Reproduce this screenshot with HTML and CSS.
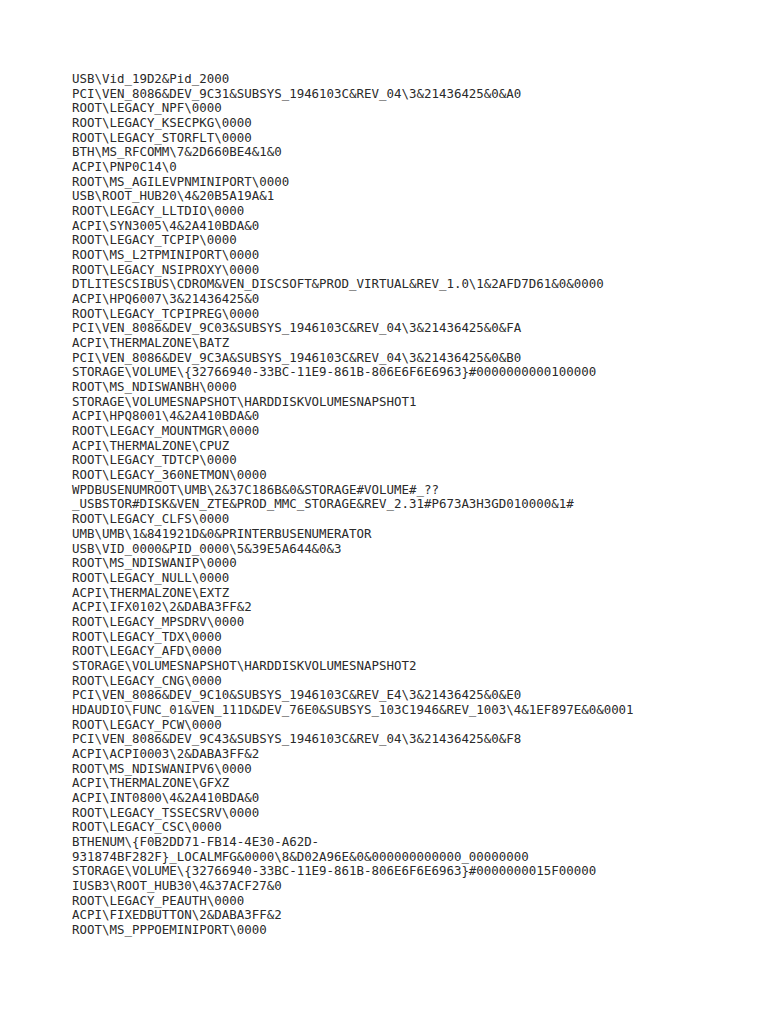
FILE: index.html
```html
<!DOCTYPE html>
<html>
<head>
<meta charset="utf-8">
<link rel="stylesheet" href="styles.css">
</head>
<body>
<pre class="listing">USB\Vid_19D2&amp;Pid_2000
PCI\VEN_8086&amp;DEV_9C31&amp;SUBSYS_1946103C&amp;REV_04\3&amp;21436425&amp;0&amp;A0
ROOT\LEGACY_NPF\0000
ROOT\LEGACY_KSECPKG\0000
ROOT\LEGACY_STORFLT\0000
BTH\MS_RFCOMM\7&amp;2D660BE4&amp;1&amp;0
ACPI\PNP0C14\0
ROOT\MS_AGILEVPNMINIPORT\0000
USB\ROOT_HUB20\4&amp;20B5A19A&amp;1
ROOT\LEGACY_LLTDIO\0000
ACPI\SYN3005\4&amp;2A410BDA&amp;0
ROOT\LEGACY_TCPIP\0000
ROOT\MS_L2TPMINIPORT\0000
ROOT\LEGACY_NSIPROXY\0000
DTLITESCSIBUS\CDROM&amp;VEN_DISCSOFT&amp;PROD_VIRTUAL&amp;REV_1.0\1&amp;2AFD7D61&amp;0&amp;0000
ACPI\HPQ6007\3&amp;21436425&amp;0
ROOT\LEGACY_TCPIPREG\0000
PCI\VEN_8086&amp;DEV_9C03&amp;SUBSYS_1946103C&amp;REV_04\3&amp;21436425&amp;0&amp;FA
ACPI\THERMALZONE\BATZ
PCI\VEN_8086&amp;DEV_9C3A&amp;SUBSYS_1946103C&amp;REV_04\3&amp;21436425&amp;0&amp;B0
STORAGE\VOLUME\{32766940-33BC-11E9-861B-806E6F6E6963}#0000000000100000
ROOT\MS_NDISWANBH\0000
STORAGE\VOLUMESNAPSHOT\HARDDISKVOLUMESNAPSHOT1
ACPI\HPQ8001\4&amp;2A410BDA&amp;0
ROOT\LEGACY_MOUNTMGR\0000
ACPI\THERMALZONE\CPUZ
ROOT\LEGACY_TDTCP\0000
ROOT\LEGACY_360NETMON\0000
WPDBUSENUMROOT\UMB\2&amp;37C186B&amp;0&amp;STORAGE#VOLUME#_??
_USBSTOR#DISK&amp;VEN_ZTE&amp;PROD_MMC_STORAGE&amp;REV_2.31#P673A3H3GD010000&amp;1#
ROOT\LEGACY_CLFS\0000
UMB\UMB\1&amp;841921D&amp;0&amp;PRINTERBUSENUMERATOR
USB\VID_0000&amp;PID_0000\5&amp;39E5A644&amp;0&amp;3
ROOT\MS_NDISWANIP\0000
ROOT\LEGACY_NULL\0000
ACPI\THERMALZONE\EXTZ
ACPI\IFX0102\2&amp;DABA3FF&amp;2
ROOT\LEGACY_MPSDRV\0000
ROOT\LEGACY_TDX\0000
ROOT\LEGACY_AFD\0000
STORAGE\VOLUMESNAPSHOT\HARDDISKVOLUMESNAPSHOT2
ROOT\LEGACY_CNG\0000
PCI\VEN_8086&amp;DEV_9C10&amp;SUBSYS_1946103C&amp;REV_E4\3&amp;21436425&amp;0&amp;E0
HDAUDIO\FUNC_01&amp;VEN_111D&amp;DEV_76E0&amp;SUBSYS_103C1946&amp;REV_1003\4&amp;1EF897E&amp;0&amp;0001
ROOT\LEGACY_PCW\0000
PCI\VEN_8086&amp;DEV_9C43&amp;SUBSYS_1946103C&amp;REV_04\3&amp;21436425&amp;0&amp;F8
ACPI\ACPI0003\2&amp;DABA3FF&amp;2
ROOT\MS_NDISWANIPV6\0000
ACPI\THERMALZONE\GFXZ
ACPI\INT0800\4&amp;2A410BDA&amp;0
ROOT\LEGACY_TSSECSRV\0000
ROOT\LEGACY_CSC\0000
BTHENUM\{F0B2DD71-FB14-4E30-A62D-
931874BF282F}_LOCALMFG&amp;0000\8&amp;D02A96E&amp;0&amp;000000000000_00000000
STORAGE\VOLUME\{32766940-33BC-11E9-861B-806E6F6E6963}#0000000015F00000
IUSB3\ROOT_HUB30\4&amp;37ACF27&amp;0
ROOT\LEGACY_PEAUTH\0000
ACPI\FIXEDBUTTON\2&amp;DABA3FF&amp;2
ROOT\MS_PPPOEMINIPORT\0000</pre>
</body>
</html>
```
FILE: styles.css
```css
html, body {
  margin: 0;
  padding: 0;
  background: #ffffff;
}

body {
  padding: 72px 0 0 72px;
}

.listing {
  margin: 0;
  font-family: "DejaVu Sans Mono", "Liberation Mono", monospace;
  font-size: 12.45px;
  line-height: 14.67px;
  color: #2a2a2a;
  white-space: pre;
}
```
